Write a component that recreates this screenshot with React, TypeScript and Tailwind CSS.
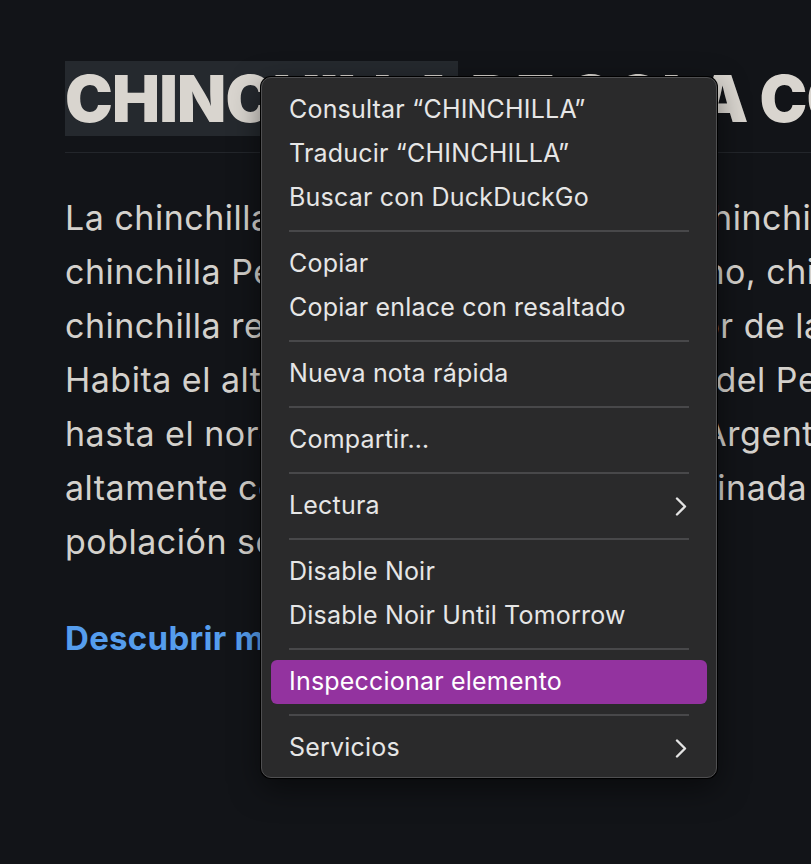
import { ReactNode } from "react";

const lines = [
  "La chinchilla de cola corta (Chinchilla chinchilla)",
  "chinchilla Peruana, chinchilla de altiplano, chinchilla",
  "chinchilla real, es una especie de roedor de la familia",
  "Habita el altiplano andino en el sureste del Perú,",
  "hasta el noroeste de Chile, el norte de Argentina.",
  "altamente codiciada por su piel, exterminada",
  "población se encuentra en peligro.",
];

const Chevron = () => (
  <svg width="12" height="19" viewBox="0 0 12 19" fill="none">
    <polyline points="2,1.5 10,9.5 2,17.5" stroke="#e4e4e4" strokeWidth="2.4" strokeLinecap="round" strokeLinejoin="round" />
  </svg>
);

const Item = ({ children, sub, active }: { children: ReactNode; sub?: boolean; active?: boolean }) => (
  <div
    className={`mx-[9px] h-[44px] rounded-[6px] flex items-center justify-between pl-[18px] pr-[20px] ${
      active ? "bg-[#93339f] text-white" : "text-[#e6e6e6]"
    }`}
  >
    <span>{children}</span>
    {sub && <Chevron />}
  </div>
);

const Sep = () => (
  <div className="h-[22px] flex items-center px-[27px]">
    <div className="h-[2px] w-full bg-[#48484a]" />
  </div>
);

export default function App() {
  return (
    <div className="relative h-[864px] w-[811px] overflow-hidden bg-[#121418] font-['Inter','Liberation_Sans',sans-serif]">
      <div className="pl-[65px] pt-[61px]">
        <h1 className="whitespace-nowrap text-[64px] leading-[75px] font-black tracking-[-0.8px] text-[#d9d5cf]">
          <span className="bg-[#25292e] inline-block">CHINCHILLA</span> DE COLA CORTA
        </h1>
        <div className="mt-[16px] h-px bg-[#23262b]" />
        <div className="mt-[38px] text-[34px] leading-[54px] tracking-[0.5px] text-[#d4d1cc]">
          {lines.map((l) => (
            <div key={l} className="whitespace-nowrap">
              {l}
            </div>
          ))}
        </div>
        <div className="mt-[42px] text-[33px] leading-[54px] font-bold tracking-[0.3px] text-[#559ded]">
          Descubrir más
        </div>
      </div>

      <div className="absolute left-[261px] top-[77px] w-[456px] h-[701px] rounded-[10px] bg-[#2a2a2b] border border-[#4f4f51] shadow-[0_0_0_1px_#000,0_10px_30px_rgba(0,0,0,0.5)] pt-[10px] text-[25px] tracking-[0.2px]">
        <Item>Consultar “CHINCHILLA”</Item>
        <Item>Traducir “CHINCHILLA”</Item>
        <Item>Buscar con DuckDuckGo</Item>
        <Sep />
        <Item>Copiar</Item>
        <Item>Copiar enlace con resaltado</Item>
        <Sep />
        <Item>Nueva nota rápida</Item>
        <Sep />
        <Item>Compartir…</Item>
        <Sep />
        <Item sub>Lectura</Item>
        <Sep />
        <Item>Disable Noir</Item>
        <Item>Disable Noir Until Tomorrow</Item>
        <Sep />
        <Item active>Inspeccionar elemento</Item>
        <Sep />
        <Item sub>Servicios</Item>
      </div>
    </div>
  );
}
